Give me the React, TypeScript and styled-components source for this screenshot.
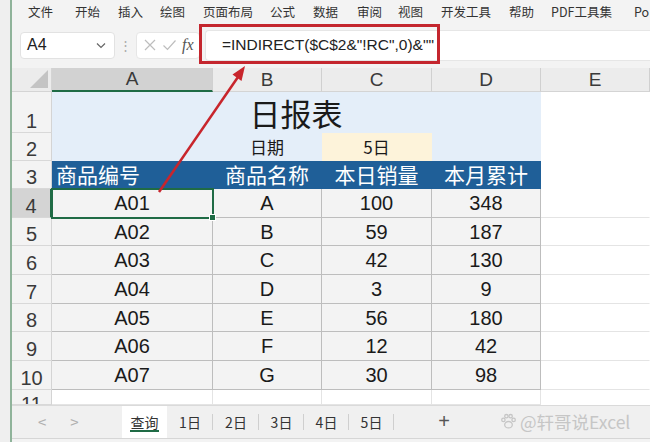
import React from "react";
import styled, { createGlobalStyle } from "styled-components";

const Global = createGlobalStyle`
  html, body { margin: 0; padding: 0; }
  body {
    font-family: "Liberation Sans", "Noto Sans CJK SC", sans-serif;
    background: #f3f3f3;
  }
`;

const CJK = `"Noto Sans CJK SC", "Liberation Sans", sans-serif`;

const Frame = styled.div`
  position: relative;
  width: 650px;
  height: 442px;
  overflow: hidden;
  display: flex;
  background: #f3f3f3;
`;

const Gutter = styled.div`
  width: 10px;
  flex: none;
  background: #efefef;
  border-right: 2px solid #8fb39a;
`;

const Main = styled.div`
  flex: 1;
  display: flex;
  flex-direction: column;
  min-width: 0;
`;

const MenuBar = styled.div`
  height: 22px;
  display: flex;
  align-items: center;
  padding-left: 16px;
  font-family: ${CJK};
  font-size: 12.5px;
  color: #333;
  white-space: nowrap;
`;

const MenuItem = styled.span<{ $w: number }>`
  width: ${(p) => p.$w}px;
  flex: none;
`;

const FormulaBar = styled.div`
  height: 46px;
  display: flex;
  align-items: center;
  padding-left: 8px;
`;

const NameBox = styled.div`
  width: 95px;
  height: 27px;
  box-sizing: border-box;
  background: #fff;
  border: 1px solid #e2e2e2;
  border-radius: 4px;
  display: flex;
  align-items: center;
  justify-content: space-between;
  padding: 0 8px 0 6px;
  font-size: 16px;
  color: #222;
`;

const Dots = styled.div`
  width: 21px;
  text-align: center;
  color: #aaa;
  font-size: 13px;
`;

const FxBox = styled.div`
  width: 64px;
  height: 27px;
  box-sizing: border-box;
  background: #fff;
  border: 1px solid #e6e6e6;
  border-radius: 4px;
  display: flex;
  align-items: center;
  gap: 5px;
  padding-left: 6px;
`;

const Fx = styled.span`
  font-family: "Liberation Serif", serif;
  font-style: italic;
  font-size: 16px;
  color: #555;
`;

const FormulaInput = styled.div`
  flex: 1;
  height: 29px;
  margin-left: 5px;
  background: #fff;
  border: 1px solid #e6e6e6;
  border-right: none;
  border-radius: 4px 0 0 4px;
  display: flex;
  align-items: center;
  padding-left: 16px;
  font-size: 15.5px;
  color: #222;
  white-space: nowrap;
`;

const RedFrame = styled.div`
  position: absolute;
  left: 199px;
  top: 24px;
  width: 241px;
  height: 40px;
  box-sizing: border-box;
  border: 3px solid #c4262e;
`;

const Sheet = styled.div`
  display: grid;
  grid-template-columns: 40px 161px 109px 110px 109px 1fr;
  grid-template-rows: 24px 41px 28px 28px repeat(7, 28.7px) 15px;
  background: #fff;
  overflow: hidden;
`;

const Corner = styled.div`
  background: #ececec;
  border-right: 1px solid #d4d4d4;
  border-bottom: 1px solid #d4d4d4;
  position: relative;
  &::after {
    content: "";
    position: absolute;
    right: 3px;
    bottom: 3px;
    width: 0;
    height: 0;
    border-left: 18px solid transparent;
    border-bottom: 18px solid #c4c4c4;
  }
`;

const ColHead = styled.div<{ $sel?: boolean }>`
  background: ${(p) => (p.$sel ? "#d2d2d2" : "#ececec")};
  border-right: 1px solid #d0d0d0;
  border-bottom: ${(p) => (p.$sel ? "2px solid #1f6b45" : "1px solid #d4d4d4")};
  display: flex;
  align-items: center;
  justify-content: center;
  font-size: 19px;
  color: #3a3a3a;
`;

const RowHead = styled.div<{ $sel?: boolean; $top?: boolean }>`
  background: ${(p) => (p.$sel ? "#d4d4d4" : "#f3f3f3")};
  border-right: ${(p) => (p.$sel ? "2px solid #1f6b45" : "1px solid #d4d4d4")};
  border-bottom: 1px solid #d8d8d8;
  display: flex;
  align-items: ${(p) => (p.$top ? "flex-start" : "flex-end")};
  justify-content: center;
  padding-bottom: 1px;
  padding-top: ${(p) => (p.$top ? "4px" : "0")};
  font-size: 20px;
  color: #3a3a3a;
  line-height: 1;
  overflow: hidden;
  box-sizing: border-box;
`;

const Cell = styled.div<{
  $bg?: string;
  $color?: string;
  $size?: number;
  $align?: "left" | "center";
  $line?: string;
  $span?: number;
  $cjk?: boolean;
  $noRight?: boolean;
}>`
  grid-column: span ${(p) => p.$span || 1};
  background: ${(p) => p.$bg || "#fff"};
  color: ${(p) => p.$color || "#1a1a1a"};
  font-size: ${(p) => p.$size || 20}px;
  font-family: ${(p) => (p.$cjk ? CJK : `"Liberation Sans", "Noto Sans CJK SC", sans-serif`)};
  display: flex;
  align-items: center;
  justify-content: ${(p) => (p.$align === "left" ? "flex-start" : "center")};
  padding-left: ${(p) => (p.$align === "left" ? "4px" : "0")};
  border-right: 1px solid ${(p) => (p.$noRight ? "transparent" : p.$line || "transparent")};
  border-bottom: 1px solid ${(p) => p.$line || "transparent"};
  line-height: 1;
  white-space: nowrap;
  position: relative;
  box-sizing: border-box;
`;

const TitleCell = styled(Cell)`
  padding-top: 1px;
`;

const SelCell = styled(Cell)`
  outline: 2px solid #1f6b45;
  outline-offset: -1px;
  z-index: 2;
  &::after {
    content: "";
    position: absolute;
    right: -4px;
    bottom: -4px;
    width: 5px;
    height: 5px;
    background: #1f6b45;
    border: 1px solid #fff;
  }
`;

const TabBar = styled.div`
  height: 32px;
  display: flex;
  align-items: stretch;
  background: #f0f0f0;
  border-top: 1px solid #dadada;
  border-bottom: 1px solid #d6d6d6;
  font-family: ${CJK};
  font-size: 14px;
  color: #333;
`;

const NavBtns = styled.div`
  width: 110px;
  display: flex;
  align-items: center;
  gap: 24px;
  padding-left: 26px;
  color: #b0b0b0;
  font-size: 15px;
  box-sizing: border-box;
`;

const Tab = styled.div<{ $active?: boolean; $w: number }>`
  width: ${(p) => p.$w}px;
  display: flex;
  align-items: center;
  justify-content: center;
  position: relative;
  background: ${(p) => (p.$active ? "#fff" : "transparent")};
  &::before {
    content: "";
    position: absolute;
    right: 0;
    top: 8px;
    bottom: 8px;
    width: 1px;
    background: ${(p) => (p.$active ? "transparent" : "#cfcfcf")};
  }
  &::after {
    content: "";
    display: ${(p) => (p.$active ? "block" : "none")};
    position: absolute;
    left: 8px;
    right: 8px;
    bottom: 6px;
    height: 2px;
    background: #1f6b45;
  }
`;

const Plus = styled.div`
  width: 100px;
  display: flex;
  align-items: center;
  justify-content: center;
  font-size: 20px;
  color: #555;
  font-family: "Liberation Sans", sans-serif;
`;

const Watermark = styled.div`
  display: flex;
  align-items: center;
  gap: 3px;
  margin-left: 6px;
  color: #c6c6c6;
  font-size: 17.5px;
  white-space: nowrap;
`;

const BottomStrip = styled.div`
  flex: 1;
  background: #f3f3f3;
`;

const Arrow = styled.svg`
  position: absolute;
  left: 0;
  top: 0;
  pointer-events: none;
  z-index: 10;
`;

const menu: [string, number][] = [
  ["文件", 47],
  ["开始", 43],
  ["插入", 42],
  ["绘图", 43],
  ["页面布局", 67],
  ["公式", 43],
  ["数据", 44],
  ["审阅", 41],
  ["视图", 43],
  ["开发工具", 68],
  ["帮助", 42],
  ["PDF工具集", 83],
  ["Po", 30],
];

const data = [
  ["A01", "A", "100", "348"],
  ["A02", "B", "59", "187"],
  ["A03", "C", "42", "130"],
  ["A04", "D", "3", "9"],
  ["A05", "E", "56", "180"],
  ["A06", "F", "12", "42"],
  ["A07", "G", "30", "98"],
];

const BLUE_L = "#e4eef9";
const BLUE_D = "#1f5f98";
const GRID = "#bdbdbd";
const FAINT = "#e4e4e4";
const DATA_BG = "#f3f3f3";

export default function App() {
  return (
    <>
      <Global />
      <Frame>
        <Gutter />
        <Main>
          <MenuBar>
            {menu.map(([t, w]) => (
              <MenuItem key={t} $w={w}>
                {t}
              </MenuItem>
            ))}
          </MenuBar>
          <FormulaBar>
            <NameBox>
              <span>A4</span>
              <svg width="10" height="7" viewBox="0 0 10 7">
                <path d="M1 1.5 L5 5.5 L9 1.5" fill="none" stroke="#666" strokeWidth="1.2" />
              </svg>
            </NameBox>
            <Dots>⋮</Dots>
            <FxBox>
              <svg width="14" height="14" viewBox="0 0 14 14">
                <path d="M2 2 L12 12 M12 2 L2 12" stroke="#bdbdbd" strokeWidth="1.2" />
              </svg>
              <svg width="15" height="14" viewBox="0 0 15 14">
                <path d="M1.5 7.5 L5.5 11.5 L13.5 2.5" fill="none" stroke="#bdbdbd" strokeWidth="1.2" />
              </svg>
              <Fx>fx</Fx>
            </FxBox>
            <FormulaInput>=INDIRECT($C$2&amp;"!RC",0)&amp;""</FormulaInput>
          </FormulaBar>
          <Sheet>
            <Corner />
            <ColHead $sel>A</ColHead>
            <ColHead>B</ColHead>
            <ColHead>C</ColHead>
            <ColHead>D</ColHead>
            <ColHead>E</ColHead>

            <RowHead>1</RowHead>
            <TitleCell $span={4} $bg={BLUE_L} $size={31} $cjk>
              日报表
            </TitleCell>
            <Cell />

            <RowHead>2</RowHead>
            <Cell $bg={BLUE_L} />
            <Cell $bg={BLUE_L} $size={17} $cjk>
              日期
            </Cell>
            <Cell $bg="#fdf3da" $size={17} $cjk>
              5日
            </Cell>
            <Cell $bg={BLUE_L} />
            <Cell />

            <RowHead>3</RowHead>
            <Cell $bg={BLUE_D} $color="#fff" $size={21} $cjk $align="left">
              商品编号
            </Cell>
            <Cell $bg={BLUE_D} $color="#fff" $size={21} $cjk>
              商品名称
            </Cell>
            <Cell $bg={BLUE_D} $color="#fff" $size={21} $cjk>
              本日销量
            </Cell>
            <Cell $bg={BLUE_D} $color="#fff" $size={21} $cjk>
              本月累计
            </Cell>
            <Cell />

            {data.map((row, i) => (
              <React.Fragment key={i}>
                <RowHead $sel={i === 0}>{i + 4}</RowHead>
                {row.map((v, j) =>
                  i === 0 && j === 0 ? (
                    <SelCell key={j} $bg={DATA_BG} $line={GRID}>
                      {v}
                    </SelCell>
                  ) : (
                    <Cell key={j} $bg={DATA_BG} $line={GRID}>
                      {v}
                    </Cell>
                  )
                )}
                <Cell $line={FAINT} $noRight />
              </React.Fragment>
            ))}

            <RowHead $top>11</RowHead>
            <Cell $line={FAINT} />
            <Cell $line={FAINT} />
            <Cell $line={FAINT} />
            <Cell $line={FAINT} />
            <Cell />
          </Sheet>
          <TabBar>
            <NavBtns>
              <span>&lt;</span>
              <span>&gt;</span>
            </NavBtns>
            <Tab $w={45} $active>
              查询
            </Tab>
            <Tab $w={46}>1日</Tab>
            <Tab $w={46}>2日</Tab>
            <Tab $w={45}>3日</Tab>
            <Tab $w={45}>4日</Tab>
            <Tab $w={45}>5日</Tab>
            <Plus>+</Plus>
            <Watermark>
              <svg width="17" height="17" viewBox="0 0 16 16">
                <g fill="none" stroke="#c6c6c6" strokeWidth="1.2">
                  <ellipse cx="8" cy="11" rx="3.6" ry="3" />
                  <circle cx="3.2" cy="6.5" r="1.6" />
                  <circle cx="6" cy="3" r="1.6" />
                  <circle cx="10" cy="3" r="1.6" />
                  <circle cx="12.8" cy="6.5" r="1.6" />
                </g>
              </svg>
              <span>@轩哥说Excel</span>
            </Watermark>
          </TabBar>
          <BottomStrip />
        </Main>
        <RedFrame />
        <Arrow width="650" height="442" viewBox="0 0 650 442">
          <line x1="159" y1="192" x2="238" y2="77" stroke="#c8252c" strokeWidth="2.5" />
          <polygon points="245,66 241.5,81 232.5,74.5" fill="#c8252c" />
        </Arrow>
      </Frame>
    </>
  );
}
